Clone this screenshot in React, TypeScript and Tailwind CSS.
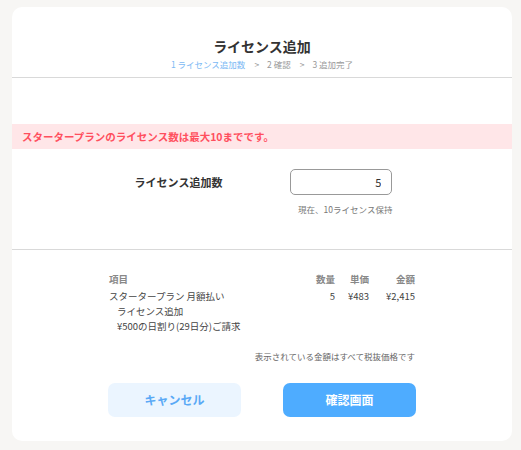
import React, { useState } from 'react';

const font = { fontFamily: '"Noto Sans CJK JP", "Noto Sans", sans-serif' };

const App: React.FC = () => {
  const [count, setCount] = useState('5');

  return (
    <div className="min-h-[450px] bg-[#f7f6f4] pt-[7px] pl-[12px]" style={font}>
      <div className="w-[500px] h-[434px] bg-white rounded-[10px] flex flex-col">
        {/* Header */}
        <header className="pt-[29px] flex flex-col items-center">
          <h1 className="text-[14px] leading-[20px] font-bold text-[#333]">ライセンス追加</h1>
          <div className="mt-[1px] flex items-center gap-[8px] text-[8.5px] leading-[14px] text-[#999]">
            <span className="text-[#7cb9f4]">1 ライセンス追加数</span>
            <span className="ml-[1px]">&gt;</span>
            <span>2 確認</span>
            <span className="ml-[1px]">&gt;</span>
            <span>3 追加完了</span>
          </div>
        </header>
        <div className="mt-[6px] border-t border-[#d9d9d9]" />

        {/* Error */}
        <div className="mt-[46px] h-[25px] bg-[#ffe6e8] flex items-center pl-[10px]">
          <p className="text-[10.5px] font-bold text-[#ff4f5e]">スタータープランのライセンス数は最大10までです。</p>
        </div>

        {/* Count input */}
        <div className="mt-[20px] flex justify-center">
          <div className="flex gap-[68px] pl-[3px]">
            <label className="h-[26px] flex items-center text-[11px] font-bold text-[#333]">ライセンス追加数</label>
            <div className="flex flex-col items-end">
              <input
                value={count}
                onChange={(e) => setCount(e.target.value)}
                className="w-[102px] h-[26px] border border-[#999] rounded-[5px] text-right pr-[10px] text-[11px] text-[#333] outline-none"
                style={font}
              />
              <span className="mt-[8px] text-[8.5px] leading-[12px] text-[#777]">現在、10ライセンス保持</span>
            </div>
          </div>
        </div>

        <div className="mt-[34px] border-t border-[#d9d9d9]" />

        {/* Summary table */}
        <div className="mt-[22px] ml-[97px] w-[306px] text-[9.5px] text-[#444]">
          <div className="grid grid-cols-[1fr_50px_34px_46px] leading-[15px] font-bold text-[#888]">
            <span>項目</span>
            <span className="text-right">数量</span>
            <span className="text-right">単価</span>
            <span className="text-right">金額</span>
          </div>
          <div className="mt-[2px] grid grid-cols-[1fr_50px_34px_46px] leading-[15px]">
            <div className="flex flex-col">
              <span>スタータープラン 月額払い</span>
              <span className="pl-[8px]">ライセンス追加</span>
              <span className="pl-[8px]">¥500の日割り(29日分)ご請求</span>
            </div>
            <span className="text-right">5</span>
            <span className="text-right">¥483</span>
            <span className="text-right">¥2,415</span>
          </div>
          <p className="mt-[16px] text-right text-[8.5px] leading-[12px] text-[#666]">表示されている金額はすべて税抜価格です</p>
        </div>

        {/* Buttons */}
        <div className="mt-[21px] flex justify-center gap-[42px]">
          <button className="w-[133px] h-[34px] rounded-[7px] bg-[#ebf5ff] text-[#5aa9f6] text-[12px] font-bold" style={font}>
            キャンセル
          </button>
          <button className="w-[133px] h-[34px] rounded-[7px] bg-[#4eacff] text-white text-[12px] font-bold" style={font}>
            確認画面
          </button>
        </div>
      </div>
    </div>
  );
};

export default App;
